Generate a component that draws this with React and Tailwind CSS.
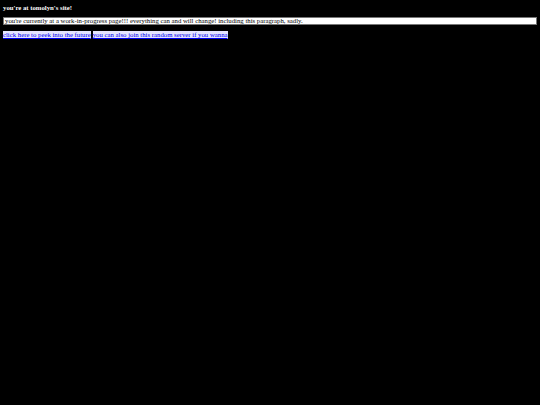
import React from "react";

export default function App() {
  return (
    <div
      className="min-h-screen bg-black px-[3px] pt-[4px] text-[6.75px] leading-[8px] text-white"
      style={{ fontFamily: '"Liberation Serif", "Times New Roman", serif' }}
    >
      <p className="font-bold">you're at tomolyn's site!</p>

      <p className="mt-[5px] border border-[#767676] bg-white px-[1px] leading-[6px] text-black">
        you're currently at a work-in-progress page!!! everything can and will
        change! including this paragraph, sadly.
      </p>

      <div className="mt-[6px] flex gap-[2px]">
        <a href="#" className="bg-[#e4e4ff] text-[#0000ee] underline">
          click here to peek into the future
        </a>
        <a href="#" className="bg-[#e4e4ff] text-[#0000ee] underline">
          you can also join this random server if you wanna
        </a>
      </div>
    </div>
  );
}
